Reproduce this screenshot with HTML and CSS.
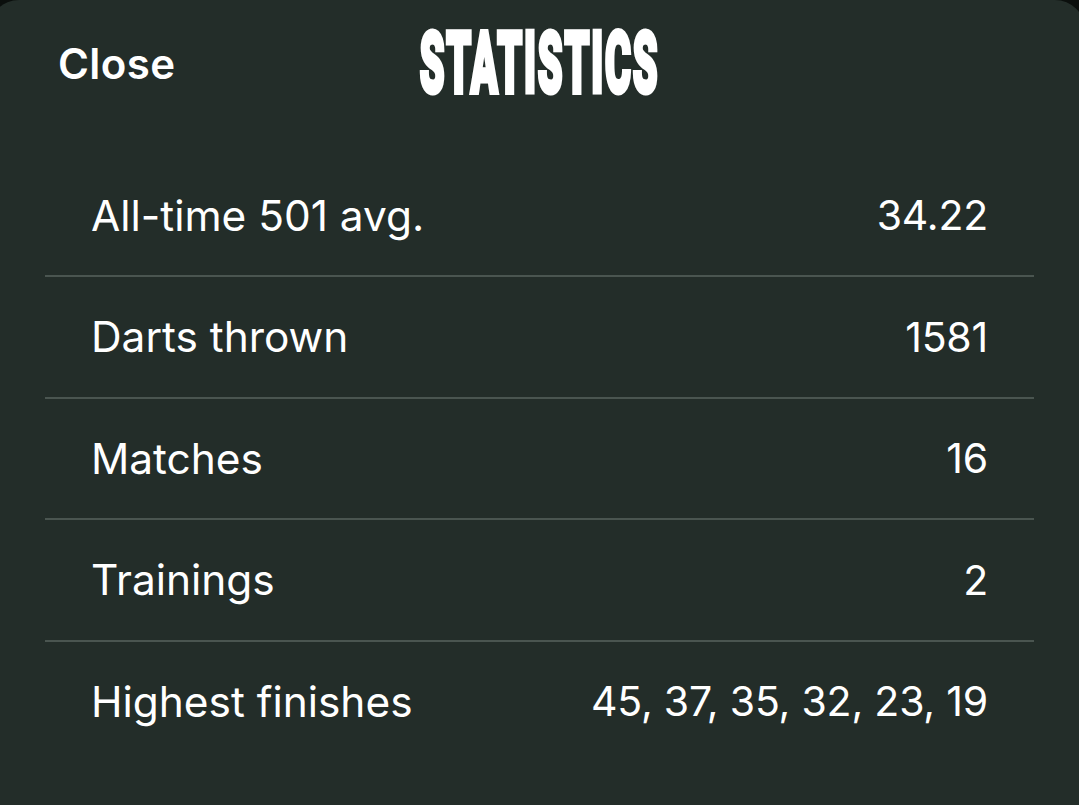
FILE: index.html
```html
<!DOCTYPE html>
<html lang="en">
<head>
<meta charset="utf-8">
<title>Statistics</title>
<link rel="stylesheet" href="styles.css">
</head>
<body>
<div class="sheet">
  <header class="header">
    <div class="close">Close</div>
    <h1 class="title"><span class="title-text">STATISTICS</span></h1>
    <div class="spacer"></div>
  </header>
  <ul class="list">
    <li class="row"><span class="label">All-time 501 avg.</span><span class="value">34.22</span></li>
    <li class="row"><span class="label">Darts thrown</span><span class="value">1581</span></li>
    <li class="row"><span class="label">Matches</span><span class="value">16</span></li>
    <li class="row"><span class="label">Trainings</span><span class="value">2</span></li>
    <li class="row"><span class="label">Highest finishes</span><span class="value">45, 37, 35, 32, 23, 19</span></li>
  </ul>
</div>
</body>
</html>
```
FILE: styles.css
```css
html, body {
  margin: 0;
  padding: 0;
  background: #0b0f0d;
  overflow: hidden;
}
body {
  font-family: Inter, "Liberation Sans", sans-serif;
  color: #ffffff;
}
.sheet {
  margin: 0 -6px 0 -11px;
  padding: 0 6px 0 11px;
  background: #232d29;
  border-radius: 30px 30px 0 0;
  min-height: 805px;
  box-sizing: border-box;
}
.header {
  height: 126px;
  display: grid;
  grid-template-columns: 1fr auto 1fr;
  align-items: center;
}
.close {
  padding-left: 58px;
  font-size: 42px;
  font-weight: 600;
  letter-spacing: 0.4px;
}
.title {
  margin: 0;
  font-size: 0;
  line-height: 1;
}
.title-text {
  display: inline-block;
  font-family: Roboto, "Liberation Sans", sans-serif;
  font-weight: 900;
  font-size: 86px;
  line-height: 1;
  letter-spacing: 4px;
  -webkit-text-stroke: 5px #ffffff;
  transform: scaleX(0.46);
  transform-origin: center;
}
.list {
  list-style: none;
  margin: 0 45px;
  padding: 29.5px 0 0;
}
.row {
  height: 119.5px;
  border-bottom: 2px solid #4a5550;
  display: flex;
  align-items: center;
  justify-content: space-between;
  padding: 0 46px;
  font-weight: 400;
}
.row:last-child {
  border-bottom: none;
}
.label {
  font-size: 42.4px;
}
.value {
  font-size: 41px;
  letter-spacing: -0.2px;
}
```
